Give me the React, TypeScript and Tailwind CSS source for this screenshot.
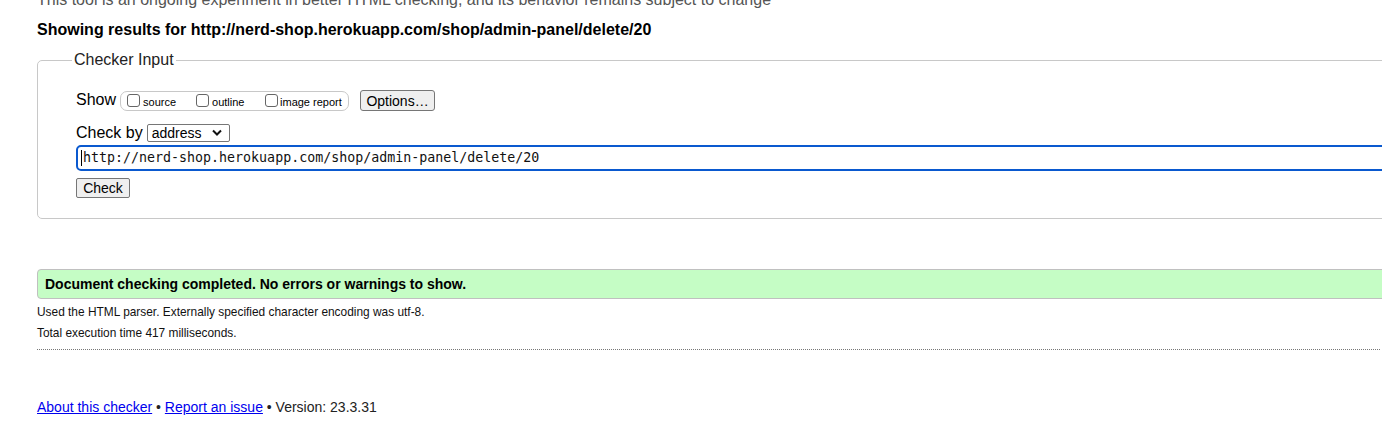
export default function App() {
  return (
    <div className="font-['Liberation_Sans',Arial,sans-serif] text-black bg-white h-[425px] w-[1382px] overflow-hidden">
      <div className="pl-[37px] mt-[-10px]">
        <p className="text-[16px] leading-[19px] text-[#555] whitespace-nowrap">
          This tool is an ongoing experiment in better HTML checking, and its behavior remains subject to change
        </p>
        <h2 className="font-bold text-[16px] leading-[19px] mt-[11px] whitespace-nowrap">
          Showing results for http://nerd-shop.herokuapp.com/shop/admin-panel/delete/20
        </h2>
        <fieldset className="mt-[12px] w-[1400px] border border-[#c8c8c8] rounded-[5px] pl-[38px] pb-[20px]">
          <legend className="ml-[-4px] px-[2px] text-[16px] leading-[18px] text-[#222]">Checker Input</legend>
          <div className="flex items-center mt-[21px] h-[21px]">
            <span className="text-[16px] leading-[18px] mr-[4px] mt-[-1px]">Show</span>
            <div className="flex items-center h-[20px] w-[229px] border border-[#c8c8c8] rounded-[7px] pl-[6px]">
              <span className="w-[13px] h-[13px] border border-[#666] rounded-[3px] mr-[3px]" />
              <span className="text-[11px] leading-[13px] mt-[3px] w-[53px]">source</span>
              <span className="w-[13px] h-[13px] border border-[#666] rounded-[3px] mr-[3px]" />
              <span className="text-[11px] leading-[13px] mt-[3px] w-[53px]">outline</span>
              <span className="w-[13px] h-[13px] border border-[#666] rounded-[3px] mr-[2px]" />
              <span className="text-[11px] leading-[13px] mt-[3px]">image report</span>
            </div>
            <span className="ml-[11px] h-[21px] w-[75px] flex items-center justify-center bg-[#efefef] border border-[#767676] rounded-[3px] text-[14px] leading-[16px]">
              Options…
            </span>
          </div>
          <div className="flex items-center mt-[13px] h-[18px]">
            <span className="text-[16px] leading-[18px] mr-[4px]">Check by</span>
            <span className="relative h-[18px] w-[83px] flex items-center border border-[#767676] rounded-[2px] pl-[4px] text-[14px] leading-[16px]">
              address
              <svg className="absolute right-[7px] top-[4px]" width="10" height="8" viewBox="0 0 10 8">
                <path d="M1 1.5 L5 5.5 L9 1.5" fill="none" stroke="#111" strokeWidth="2" />
              </svg>
            </span>
          </div>
          <div className="mt-[3px] h-[26px] w-[1400px] border-2 border-[#0a59cf] rounded-[5px] flex items-center pl-[3px] font-['DejaVu_Sans_Mono',monospace] text-[13.3px] leading-[16px] text-[#111]">
            <span className="w-px h-[16px] bg-black mr-[1px]" />
            http://nerd-shop.herokuapp.com/shop/admin-panel/delete/20
          </div>
          <span className="mt-[7px] h-[20px] w-[54px] flex items-center justify-center bg-[#efefef] border border-[#767676] rounded-[2px] text-[14px] leading-[16px]">
            Check
          </span>
        </fieldset>
        <div className="mt-[50px] w-[1400px] h-[30px] bg-[#c5fdc5] border border-[#c0c0c0] rounded-l-[4px] flex items-center pl-[7px]">
          <span className="font-bold text-[14px] leading-[16px]">Document checking completed. No errors or warnings to show.</span>
        </div>
        <p className="mt-[3px] text-[11.9px] leading-[21px] text-[#111] whitespace-nowrap">Used the HTML parser. Externally specified character encoding was utf-8.</p>
        <p className="text-[11.9px] leading-[21px] text-[#111] whitespace-nowrap">Total execution time 417 milliseconds.</p>
        <div className="mt-[5px] w-[1343px] border-t border-dotted border-[#777]" />
        <p className="mt-[49px] text-[14px] leading-[16px] text-[#222] whitespace-nowrap">
          <a className="text-[#0000ee] underline" href="#">About this checker</a>
          {" • "}
          <a className="text-[#0000ee] underline" href="#">Report an issue</a>
          {" • Version: 23.3.31"}
        </p>
      </div>
    </div>
  );
}
